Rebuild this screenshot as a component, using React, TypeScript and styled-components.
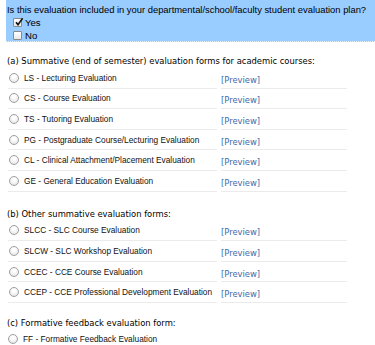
import styled, { createGlobalStyle } from "styled-components";

const GlobalStyle = createGlobalStyle`
  html, body {
    margin: 0;
    padding: 0;
    background: #ffffff;
  }
  body {
    font-family: "Liberation Sans", Arial, sans-serif;
    color: #000;
  }
`;

type Form = { code: string; name: string };

const academic: Form[] = [
  { code: "LS", name: "Lecturing Evaluation" },
  { code: "CS", name: "Course Evaluation" },
  { code: "TS", name: "Tutoring Evaluation" },
  { code: "PG", name: "Postgraduate Course/Lecturing Evaluation" },
  { code: "CL", name: "Clinical Attachment/Placement Evaluation" },
  { code: "GE", name: "General Education Evaluation" },
];

const other: Form[] = [
  { code: "SLCC", name: "SLC Course Evaluation" },
  { code: "SLCW", name: "SLC Workshop Evaluation" },
  { code: "CCEC", name: "CCE Course Evaluation" },
  { code: "CCEP", name: "CCE Professional Development Evaluation" },
];

const Page = styled.div`
  padding: 0 0 0 6px;
  overflow: hidden;
  height: 345px;
`;

const PlanBox = styled.div`
  background: #99ccff;
  border-bottom: 1px dotted #e4f0fb;
  padding: 4px 0 3px 1px;
  height: 34px;
`;

const Question = styled.div`
  font-size: 9.4px;
  line-height: 12px;
  white-space: nowrap;
`;

const CheckRow = styled.label`
  display: flex;
  align-items: center;
  gap: 3px;
  height: 13px;
  padding-left: 6px;
  font-size: 9.6px;
`;

const Box = styled.span`
  position: relative;
  width: 9px;
  height: 9px;
  border: 1px solid #8a8a8a;
  border-radius: 1px;
  background: linear-gradient(#ffffff, #e8e8e8);
  box-sizing: border-box;
`;

const Tick = styled.svg`
  position: absolute;
  left: 0px;
  top: -2px;
`;

const Heading = styled.div`
  font-family: "DejaVu Sans", Verdana, sans-serif;
  font-size: 8.4px;
  line-height: 12px;
  padding-left: 1px;
  white-space: nowrap;
`;

const Section = styled.div<{ $top: number }>`
  margin-top: ${(p) => p.$top}px;
`;

const Table = styled.table`
  border-collapse: separate;
  border-spacing: 4px 0;
  margin: 1px 0 0 -2px;
  table-layout: fixed;
`;

const Cell = styled.td<{ $wide?: boolean }>`
  height: 19.6px;
  padding: 0;
  border-bottom: 1px solid #ebebeb;
  vertical-align: middle;
  width: ${(p) => (p.$wide ? "209px" : "126px")};
  white-space: nowrap;
`;

const Option = styled.label`
  display: flex;
  align-items: center;
  gap: 5px;
  padding-left: 1px;
  font-size: 8.3px;
  color: #111;
`;

const Radio = styled.span`
  flex: none;
  width: 10px;
  height: 10px;
  border-radius: 50%;
  border: 1px solid #a0a0a0;
  box-sizing: border-box;
  background: radial-gradient(circle at 50% 35%, #ffffff 20%, #dedede 100%);
`;

const Preview = styled.a`
  font-family: "DejaVu Sans", Verdana, sans-serif;
  font-size: 8.4px;
  color: #3d6bab;
  text-decoration: none;
`;

const Single = styled.div`
  height: 20px;
  display: flex;
  align-items: center;
  padding-left: 1px;
`;

const FormRows = ({ forms }: { forms: Form[] }) => (
  <Table>
    <tbody>
      {forms.map((f) => (
        <tr key={f.code}>
          <Cell $wide>
            <Option>
              <Radio />
              {f.code} - {f.name}
            </Option>
          </Cell>
          <Cell>
            <Preview href="#">[Preview]</Preview>
          </Cell>
        </tr>
      ))}
    </tbody>
  </Table>
);

export default function App() {
  return (
    <Page>
      <GlobalStyle />
      <PlanBox>
        <Question>
          Is this evaluation included in your departmental/school/faculty student evaluation plan?
        </Question>
        <CheckRow>
          <Box>
            <Tick width="10" height="10" viewBox="0 0 10 10">
              <path d="M2 5.2 L4 7.6 L8.6 1.2" fill="none" stroke="#111" strokeWidth="1.6" />
            </Tick>
          </Box>
          Yes
        </CheckRow>
        <CheckRow>
          <Box />
          No
        </CheckRow>
      </PlanBox>

      <Section $top={13}>
        <Heading>(a) Summative (end of semester) evaluation forms for academic courses:</Heading>
        <FormRows forms={academic} />
      </Section>

      <Section $top={16}>
        <Heading>(b) Other summative evaluation forms:</Heading>
        <FormRows forms={other} />
      </Section>

      <Section $top={14}>
        <Heading>(c) Formative feedback evaluation form:</Heading>
        <Single>
          <Option>
            <Radio />
            FF - Formative Feedback Evaluation
          </Option>
        </Single>
      </Section>
    </Page>
  );
}
